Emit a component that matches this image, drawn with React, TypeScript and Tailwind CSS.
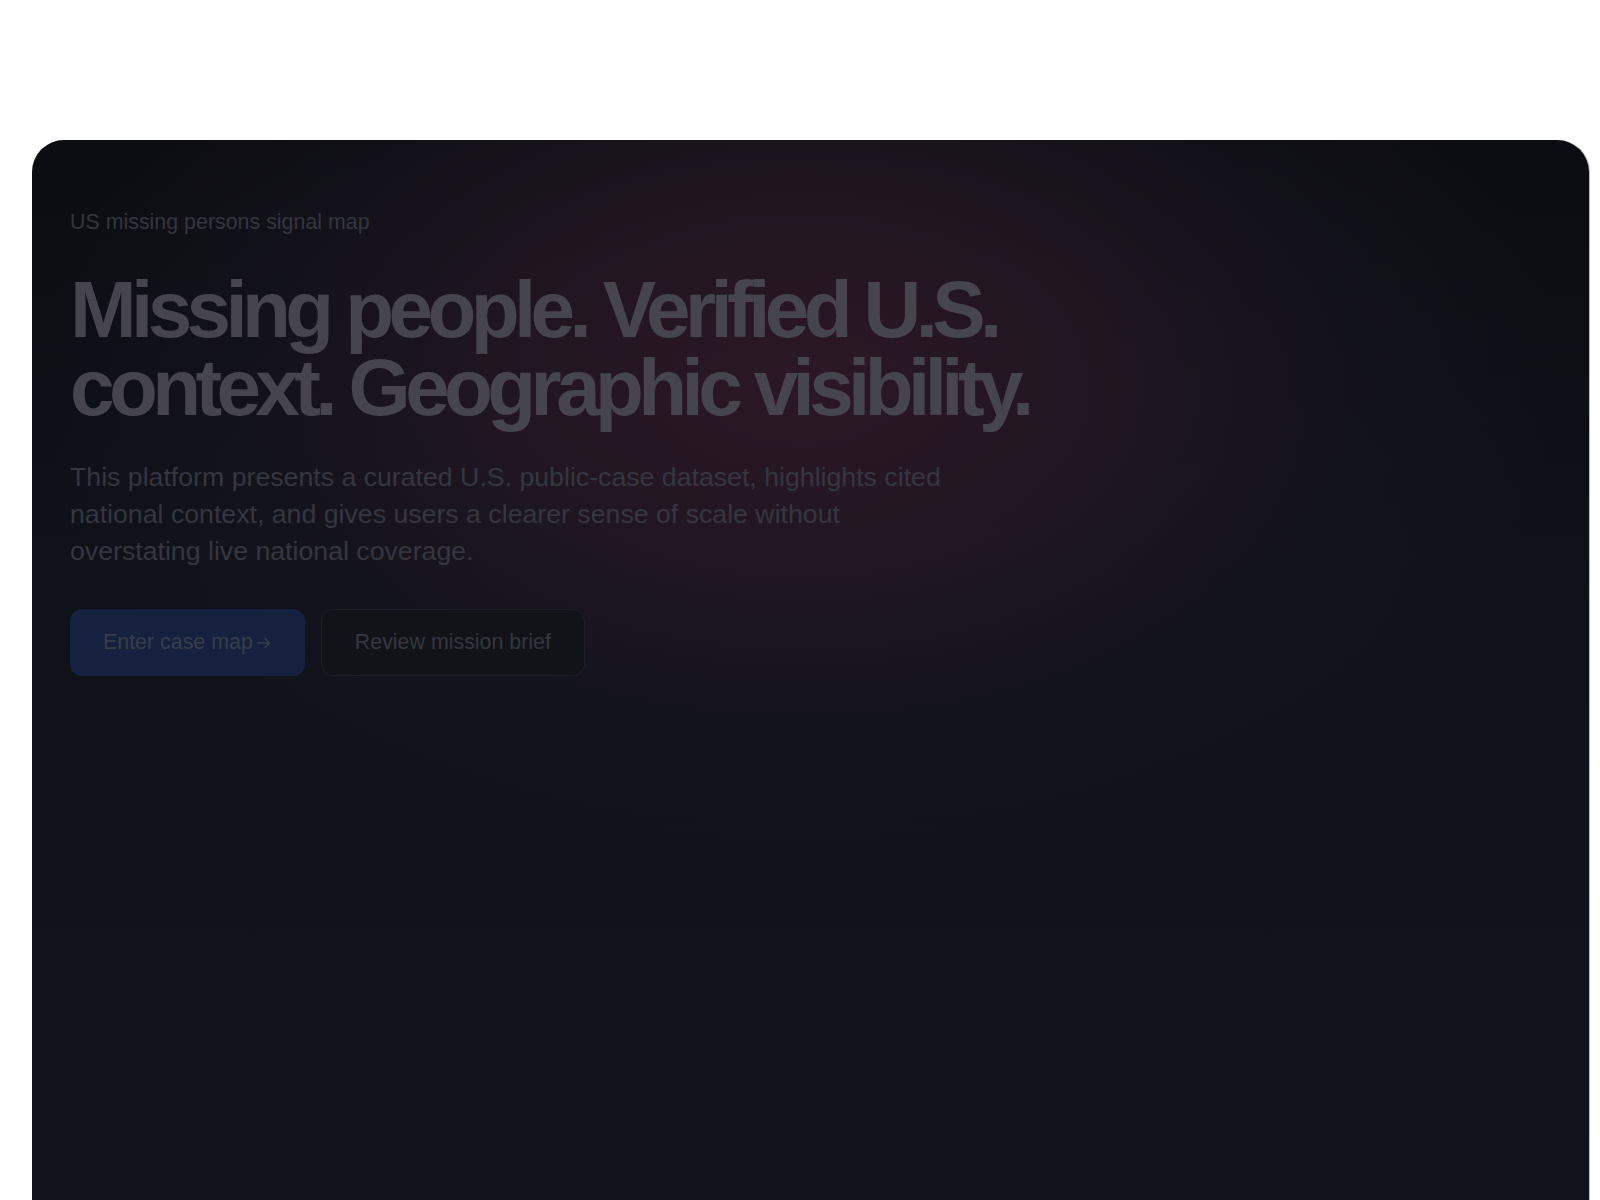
import React from 'react';

const ArrowRight: React.FC = () => (
  <svg width="16" height="16" viewBox="0 0 16 16" fill="none" className="ml-[3px] mt-[1px]">
    <path d="M2 8h11.5M9 3.5L13.5 8 9 12.5" stroke="currentColor" strokeWidth="1.7" strokeLinecap="round" strokeLinejoin="round" />
  </svg>
);

export default function App() {
  return (
    <div className="min-h-[1200px] bg-white pt-[140px] font-['Liberation_Sans',Arial,sans-serif] overflow-hidden">
      <section className="relative ml-8 w-[1557px] h-[1060px] rounded-t-[32px] overflow-hidden bg-[linear-gradient(180deg,#0c0d12_0%,#10121a_45%,#11141c_100%)] shadow-[1px_0_0_rgba(120,120,135,0.5)]">
        {/* glow */}
        <div className="absolute inset-0 bg-[radial-gradient(ellipse_760px_470px_at_770px_240px,rgba(46,24,38,0.95)_0%,rgba(38,24,36,0.72)_40%,rgba(26,22,34,0.38)_72%,rgba(18,18,26,0)_100%)]" />

        <div className="relative px-[38px] pt-[67px]">
          <p className="text-[21.4px] leading-[30px] text-[#34363e]">US missing persons signal map</p>

          <h1 className="mt-[34px] max-w-5xl text-[80px] leading-[78px] font-bold tracking-[-0.07em] text-[#46454e]">
            Missing people. Verified U.S. context. Geographic visibility.
          </h1>

          <p className="mt-[32px] max-w-4xl text-[26.7px] leading-[37px] text-[#353640]">
            This platform presents a curated U.S. public-case dataset, highlights cited national context, and gives users a clearer sense of scale without overstating live national coverage.
          </p>

          <div className="mt-[39px] flex gap-4">
            <button className="flex items-center h-[67px] px-[33px] rounded-xl bg-[#15213f] text-[21.4px] text-[#383d4c]">
              Enter case map
              <ArrowRight />
            </button>
            <button className="flex items-center h-[67px] px-[33px] rounded-xl border border-[#1d1f28] bg-[#121319] text-[21.4px] text-[#35373f]">
              Review mission brief
            </button>
          </div>
        </div>
      </section>
    </div>
  );
}
